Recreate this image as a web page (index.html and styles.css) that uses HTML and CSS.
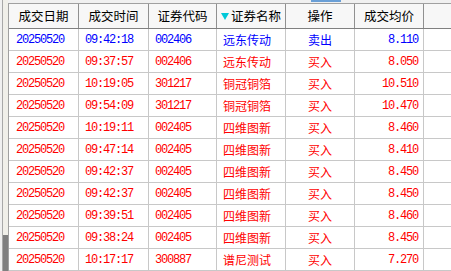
FILE: index.html
```html
<!DOCTYPE html>
<html>
<head>
<meta charset="utf-8">
<link rel="stylesheet" href="styles.css">
</head>
<body>
<div class="app">
  <div class="side">
    <div class="track"><div class="thumb"></div></div>
  </div>
  <div class="main">
    <div class="topbar"><span class="tabmark"></span></div>
    <div class="grid">
      <div class="row head">
        <div class="c c1">成交日期</div>
        <div class="c c2">成交时间</div>
        <div class="c c3">证券代码</div>
        <div class="c c4"><svg class="tri" width="8" height="7" viewBox="0 0 8 7"><polygon points="0,0 8,0 4,7" fill="#00c8d8"/></svg>证券名称</div>
        <div class="c c5">操作</div>
        <div class="c c6">成交均价</div>
        <div class="c c7"></div>
      </div>
      <div class="row blue">
        <div class="c c1 num">20250520</div><div class="c c2 num">09:42:18</div><div class="c c3 num">002406</div><div class="c c4 name">远东传动</div><div class="c c5 act">卖出</div><div class="c c6 num price">8.110</div><div class="c c7"></div>
      </div>
      <div class="row red">
        <div class="c c1 num">20250520</div><div class="c c2 num">09:37:57</div><div class="c c3 num">002406</div><div class="c c4 name">远东传动</div><div class="c c5 act">买入</div><div class="c c6 num price">8.050</div><div class="c c7"></div>
      </div>
      <div class="row red">
        <div class="c c1 num">20250520</div><div class="c c2 num">10:19:05</div><div class="c c3 num">301217</div><div class="c c4 name">铜冠铜箔</div><div class="c c5 act">买入</div><div class="c c6 num price">10.510</div><div class="c c7"></div>
      </div>
      <div class="row red">
        <div class="c c1 num">20250520</div><div class="c c2 num">09:54:09</div><div class="c c3 num">301217</div><div class="c c4 name">铜冠铜箔</div><div class="c c5 act">买入</div><div class="c c6 num price">10.470</div><div class="c c7"></div>
      </div>
      <div class="row red">
        <div class="c c1 num">20250520</div><div class="c c2 num">10:19:11</div><div class="c c3 num">002405</div><div class="c c4 name">四维图新</div><div class="c c5 act">买入</div><div class="c c6 num price">8.460</div><div class="c c7"></div>
      </div>
      <div class="row red">
        <div class="c c1 num">20250520</div><div class="c c2 num">09:47:14</div><div class="c c3 num">002405</div><div class="c c4 name">四维图新</div><div class="c c5 act">买入</div><div class="c c6 num price">8.410</div><div class="c c7"></div>
      </div>
      <div class="row red">
        <div class="c c1 num">20250520</div><div class="c c2 num">09:42:37</div><div class="c c3 num">002405</div><div class="c c4 name">四维图新</div><div class="c c5 act">买入</div><div class="c c6 num price">8.450</div><div class="c c7"></div>
      </div>
      <div class="row red">
        <div class="c c1 num">20250520</div><div class="c c2 num">09:42:37</div><div class="c c3 num">002405</div><div class="c c4 name">四维图新</div><div class="c c5 act">买入</div><div class="c c6 num price">8.450</div><div class="c c7"></div>
      </div>
      <div class="row red">
        <div class="c c1 num">20250520</div><div class="c c2 num">09:39:51</div><div class="c c3 num">002405</div><div class="c c4 name">四维图新</div><div class="c c5 act">买入</div><div class="c c6 num price">8.460</div><div class="c c7"></div>
      </div>
      <div class="row red">
        <div class="c c1 num">20250520</div><div class="c c2 num">09:38:24</div><div class="c c3 num">002405</div><div class="c c4 name">四维图新</div><div class="c c5 act">买入</div><div class="c c6 num price">8.450</div><div class="c c7"></div>
      </div>
      <div class="row red">
        <div class="c c1 num">20250520</div><div class="c c2 num">10:17:17</div><div class="c c3 num">300887</div><div class="c c4 name">谱尼测试</div><div class="c c5 act">买入</div><div class="c c6 num price">7.270</div><div class="c c7"></div>
      </div>
    </div>
  </div>
</div>
</body>
</html>
```

FILE: styles.css
```css
html, body {
  margin: 0;
  padding: 0;
  background: #ffffff;
  overflow: hidden;
}
.app {
  display: flex;
  width: 451px;
  height: 271px;
  overflow: hidden;
  font-family: "Noto Sans CJK SC", sans-serif;
  font-size: 12px;
}
.side {
  padding-left: 2px;
  flex: 0 0 auto;
  background: #f0f0f0;
  display: flex;
  width: 6px;
}
.track {
  flex: 1;
  border-left: 1px solid #a8a8a8;
  background: #f0efe9;
  display: flex;
  flex-direction: column;
  justify-content: flex-end;
}
.thumb {
  height: 36px;
  background: #808080;
}
.main {
  flex: 1;
  display: flex;
  flex-direction: column;
  min-width: 0;
}
.topbar {
  height: 5px;
  background: #f0f0f0;
  position: relative;
}
.tabmark {
  position: absolute;
  left: 303px;
  top: 0;
  width: 30px;
  height: 2px;
  background: #6a9fd6;
}
.grid {
  border-left: 1px solid #a0a0a0;
  display: flex;
  flex-direction: column;
}
.row {
  display: grid;
  grid-template-columns: 70px 70px 68px 69px 69px 69px 1fr;
  height: 21px;
  border-bottom: 1px solid #c8c8c8;
}
.row.head {
  height: 24px;
  border-top: 1px solid #a0a0a0;
  border-bottom: 1px solid #808080;
  background: #f7f7f7;
  color: #000000;
  font-size: 12.5px;
}
.c {
  border-right: 1px solid #c8c8c8;
  display: flex;
  align-items: center;
  white-space: nowrap;
  overflow: hidden;
  line-height: 1;
}
.head .c {
  border-right-color: #909090;
  justify-content: center;
}
.c7 { border-right: none; }
.head .c7 { border-right: none; }
.tri {
  margin-right: 2px;
  margin-top: 1px;
}
.blue { color: #0000ff; }
.red { color: #ff0000; }
.num {
  font-family: "Liberation Mono", monospace;
  font-size: 12px;
  letter-spacing: -1.2px;
  padding-left: 6px;
}
.c1.num { padding-left: 7px; }
.name { padding-left: 6px; }
.act { justify-content: center; }
.price {
  justify-content: flex-end;
  padding-left: 0;
  padding-right: 5px;
}
```
